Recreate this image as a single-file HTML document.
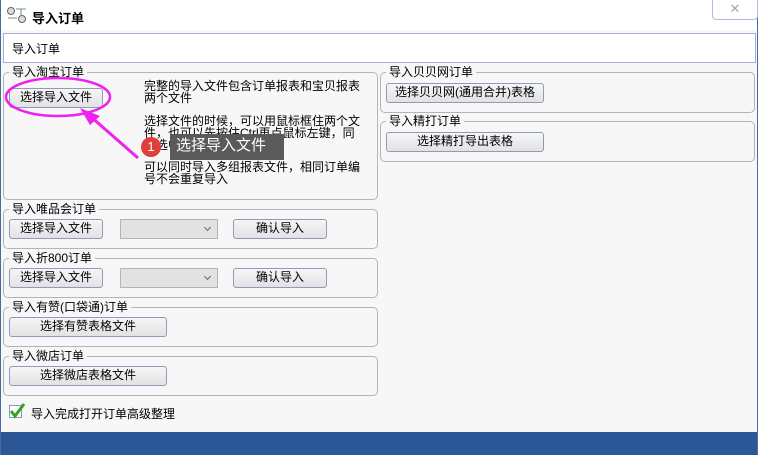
<!DOCTYPE html>
<html><head><meta charset="utf-8"><style>
*{margin:0;padding:0;box-sizing:border-box}
body{width:758px;height:455px;overflow:hidden;background:#f7f7f7;font:12px "Liberation Sans","Noto Sans CJK SC",sans-serif;color:#000;position:relative}
.a{position:absolute;white-space:nowrap}
.g{position:absolute;border:1px solid #b4b4b4;border-radius:5px}
.lbl{position:absolute;background:#f7f7f7;padding:0 3px;line-height:13px}
.btn{position:absolute;border:1px solid #8d9db8;border-radius:3px;background:linear-gradient(#f6f6f6,#e2e2e2);text-align:center;line-height:17px}
.sel{position:absolute;border:1px solid #b5b5b5;background:#e2e2e2}
.sel:after{content:"";position:absolute;right:7px;top:5px;width:4px;height:4px;border-right:1px solid #666;border-bottom:1px solid #666;transform:rotate(45deg)}
.t{position:absolute;line-height:12px;font-size:12px;width:218px;white-space:normal}
</style></head><body>
<div class="a" style="left:0;top:0;width:758px;height:30px;background:#fff"></div>
<div class="a" style="left:0;top:0;width:1px;height:455px;background:#4a6aa0"></div>
<div class="a" style="left:757px;top:0;width:1px;height:455px;background:#4a6aa0"></div>
<svg class="a" style="left:6px;top:6px" width="22" height="18"><circle cx="5" cy="5" r="3.5" fill="#ddd" stroke="#666"/><circle cx="16" cy="13" r="3.5" fill="#ddd" stroke="#666"/><path d="M2 12h9M10 3h10M15 3v6" stroke="#6a9a6a" fill="none"/></svg>
<div class="a" style="left:32px;top:8px;font-weight:bold;font-size:13px">导入订单</div>
<div class="a" style="left:712px;top:-1px;width:46px;height:21px;border:1px solid #a9c0e0;border-radius:0 0 4px 4px;background:#fff;color:#9ab;text-align:center;line-height:18px;font-size:13px">✕</div>
<div class="a" style="left:3px;top:33px;width:753px;height:30px;border:1px solid #a0b0d8;background:#fff;padding:6px 8px">导入订单</div>

<div class="g" style="left:3px;top:72px;width:375px;height:128px"></div>
<div class="lbl" style="left:9px;top:66px">导入淘宝订单</div>
<div class="btn" style="left:9px;top:88px;width:94px;height:20px">选择导入文件</div>
<div class="t" style="left:144px;top:80px">完整的导入文件包含订单报表和宝贝报表两个文件</div>
<div class="t" style="left:144px;top:115px">选择文件的时候，可以用鼠标框住两个文件，也可以先按住Ctrl再点鼠标左键，同时选中两个报表文件</div>
<div class="t" style="left:144px;top:161px">可以同时导入多组报表文件，相同订单编号不会重复导入</div>
<div class="a" style="left:170px;top:134px;width:114px;height:26px;background:#5a5a5a;color:#fff;font-size:15px;line-height:24px;padding-left:6px">选择导入文件</div>
<div class="a" style="left:141px;top:137px;width:20px;height:20px;border-radius:50%;background:#e0403a;color:#fff;text-align:center;line-height:20px;font-size:13px">1</div>
<svg class="a" style="left:0;top:70px" width="160" height="100"><ellipse cx="58" cy="27" rx="52" ry="19" fill="none" stroke="#f020f0" stroke-width="2.5"/><path d="M138 88 L90 46" stroke="#f020f0" stroke-width="3"/><path d="M80 38 L100 46 L90 55Z" fill="#f020f0"/></svg>

<div class="g" style="left:3px;top:209px;width:375px;height:40px"></div>
<div class="lbl" style="left:9px;top:203px">导入唯品会订单</div>
<div class="btn" style="left:9px;top:219px;width:94px;height:20px">选择导入文件</div>
<div class="sel" style="left:120px;top:219px;width:98px;height:20px"></div>
<div class="btn" style="left:233px;top:219px;width:94px;height:20px">确认导入</div>

<div class="g" style="left:3px;top:258px;width:375px;height:40px"></div>
<div class="lbl" style="left:9px;top:252px">导入折800订单</div>
<div class="btn" style="left:9px;top:268px;width:94px;height:20px">选择导入文件</div>
<div class="sel" style="left:120px;top:268px;width:98px;height:20px"></div>
<div class="btn" style="left:233px;top:268px;width:94px;height:20px">确认导入</div>

<div class="g" style="left:3px;top:307px;width:375px;height:40px"></div>
<div class="lbl" style="left:9px;top:301px">导入有赞(口袋通)订单</div>
<div class="btn" style="left:9px;top:317px;width:158px;height:20px">选择有赞表格文件</div>

<div class="g" style="left:3px;top:356px;width:375px;height:40px"></div>
<div class="lbl" style="left:9px;top:350px">导入微店订单</div>
<div class="btn" style="left:9px;top:366px;width:158px;height:20px">选择微店表格文件</div>

<div class="g" style="left:380px;top:72px;width:375px;height:41px"></div>
<div class="lbl" style="left:386px;top:66px">导入贝贝网订单</div>
<div class="btn" style="left:386px;top:83px;width:158px;height:20px">选择贝贝网(通用合并)表格</div>
<div class="g" style="left:380px;top:121px;width:375px;height:41px"></div>
<div class="lbl" style="left:386px;top:115px">导入精打订单</div>
<div class="btn" style="left:386px;top:132px;width:158px;height:20px">选择精打导出表格</div>

<div class="a" style="left:9px;top:405px;width:13px;height:13px;border:1px solid #7a9ac8;background:#fff"></div>
<svg class="a" style="left:8px;top:401px" width="18" height="18"><path d="M3 10 L7 15 L16 3" stroke="#3aa020" stroke-width="3" fill="none"/></svg>
<div class="a" style="left:31px;top:405px">导入完成打开订单高级整理</div>
<div class="a" style="left:1px;top:432px;width:756px;height:23px;background:#2b5797"></div>
</body></html>
